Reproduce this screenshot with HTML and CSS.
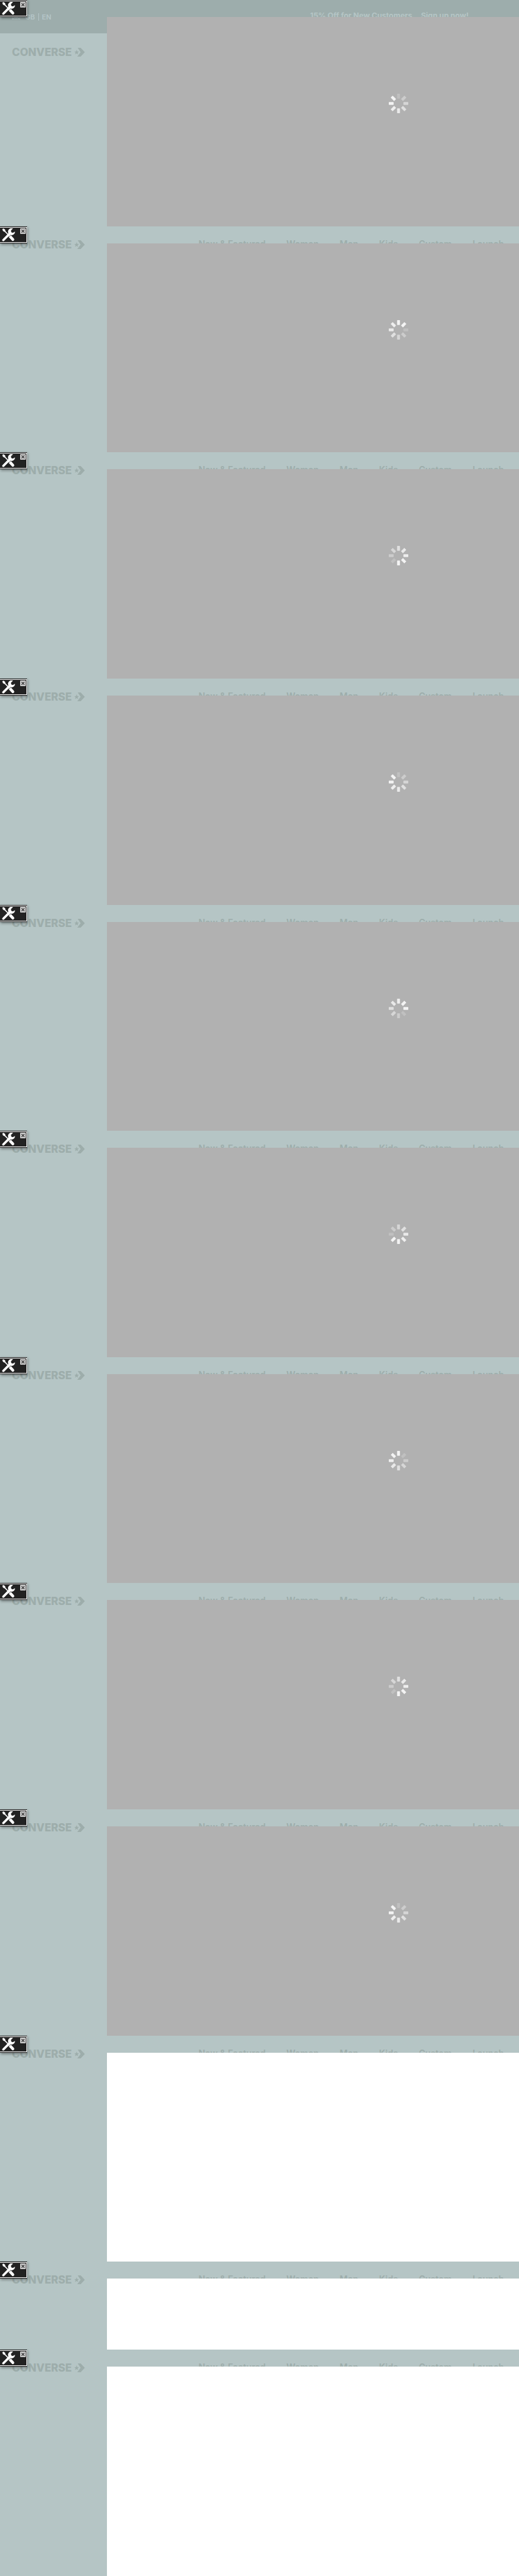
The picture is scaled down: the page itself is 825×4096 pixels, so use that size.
FILE: index.html
```html
<!DOCTYPE html>
<html lang="en">
<head>
<meta charset="utf-8">
<meta name="viewport" content="width=device-width, initial-scale=1">
<title>Converse</title>
<link rel="stylesheet" href="styles.css">
</head>
<body>
<svg class="defs" aria-hidden="true">
  <symbol id="spinner" viewBox="0 0 48 48">
    <g fill="#fff">
      <rect x="20.5" width="7" height="12" rx="1" opacity=".2"/>
      <rect x="20.5" width="7" height="12" rx="1" opacity=".35" transform="rotate(45 24 24)"/>
      <rect x="20.5" width="7" height="12" rx="1" opacity=".48" transform="rotate(90 24 24)"/>
      <rect x="20.5" width="7" height="12" rx="1" opacity=".6" transform="rotate(135 24 24)"/>
      <rect x="20.5" width="7" height="12" rx="1" opacity=".72" transform="rotate(180 24 24)"/>
      <rect x="20.5" width="7" height="12" rx="1" opacity=".78" transform="rotate(225 24 24)"/>
      <rect x="20.5" width="7" height="12" rx="1" opacity=".84" transform="rotate(270 24 24)"/>
      <rect x="20.5" width="7" height="12" rx="1" opacity=".86" transform="rotate(315 24 24)"/>
    </g>
  </symbol>
  <symbol id="tools" viewBox="0 0 32 32">
    <path d="M4 4 L19 19" stroke="#fff" stroke-width="2.4"/>
    <path d="M1 2 L4 .5 L8 3.5 L8.5 7 L6 8.5 L2.5 6.5 Z" fill="#fff"/>
    <path d="M20.5 20.5 L26.5 27" stroke="#fff" stroke-width="7" stroke-linecap="round"/>
    <path d="M17 22 L22 17" stroke="#fff" stroke-width="2"/>
    <path d="M3.5 28.5 L20 12" stroke="#fff" stroke-width="5.5" stroke-linecap="round"/>
    <path d="M27 .5 A8.5 8.5 0 1 0 31.8 8 L26.5 11 L22.5 9.5 L22 5.5 Z" fill="#fff"/>
    <path d="M16 22.5 L22.5 16" stroke="#222" stroke-width="1"/>
  </symbol>
  <symbol id="close" viewBox="0 0 14 14">
    <rect width="14" height="14" rx="1.5" fill="#ccc"/>
    <path d="M3.5 3.5 L10.5 10.5 M10.5 3.5 L3.5 10.5" stroke="#444" stroke-width="2.4"/>
  </symbol>
  <symbol id="chevron" viewBox="0 0 25 21">
    <path d="M8 0 H15 L25 10.5 L15 21 H7 L15 10.5 Z"/>
    <path d="M5.5 4.5 L6.9 8.6 L11 8.9 L7.9 11.5 L9 15.8 L5.5 13.4 L1.7 15.8 L2.9 11.5 L0 8.9 L4.1 8.6 Z"/>
  </symbol>
</svg>

<main>
  <section class="frame frame-first">
    <div class="tools"><button aria-label="Tools"><svg><use href="#tools"/></svg></button><button class="close" aria-label="Close"><svg><use href="#close"/></svg></button></div>
    <div class="side">
      <div class="locale"><svg class="flag" viewBox="0 0 20 14" aria-hidden="true"><path d="M0 0H20V14H0Z M0 0L20 14M20 0L0 14M10 0V14M0 7H20"/></svg><a href="#">GB</a><span class="rule"></span><a href="#">EN</a></div>
      <a class="logo" href="#">CONVERSE<svg aria-hidden="true"><use href="#chevron"/></svg></a>
    </div>
    <div class="strip promo"><span>15% Off for New Customers</span><a href="#">Sign up now!</a></div>
    <div class="panel"><svg class="spinner"><use href="#spinner"/></svg></div>
  </section>

  <section class="frame">
    <div class="tools"><button aria-label="Tools"><svg><use href="#tools"/></svg></button><button class="close" aria-label="Close"><svg><use href="#close"/></svg></button></div>
    <div class="side"><a class="logo" href="#">CONVERSE<svg aria-hidden="true"><use href="#chevron"/></svg></a></div>
    <nav class="strip"><a href="#">New &amp; Featured</a><a href="#">Women</a><a href="#">Men</a><a href="#">Kids</a><a href="#">Custom</a><a href="#">Launch</a></nav>
    <div class="panel"><svg class="spinner turn-2"><use href="#spinner"/></svg></div>
  </section>

  <section class="frame">
    <div class="tools"><button aria-label="Tools"><svg><use href="#tools"/></svg></button><button class="close" aria-label="Close"><svg><use href="#close"/></svg></button></div>
    <div class="side"><a class="logo" href="#">CONVERSE<svg aria-hidden="true"><use href="#chevron"/></svg></a></div>
    <nav class="strip"><a href="#">New &amp; Featured</a><a href="#">Women</a><a href="#">Men</a><a href="#">Kids</a><a href="#">Custom</a><a href="#">Launch</a></nav>
    <div class="panel"><svg class="spinner turn-5"><use href="#spinner"/></svg></div>
  </section>

  <section class="frame">
    <div class="tools"><button aria-label="Tools"><svg><use href="#tools"/></svg></button><button class="close" aria-label="Close"><svg><use href="#close"/></svg></button></div>
    <div class="side"><a class="logo" href="#">CONVERSE<svg aria-hidden="true"><use href="#chevron"/></svg></a></div>
    <nav class="strip"><a href="#">New &amp; Featured</a><a href="#">Women</a><a href="#">Men</a><a href="#">Kids</a><a href="#">Custom</a><a href="#">Launch</a></nav>
    <div class="panel"><svg class="spinner"><use href="#spinner"/></svg></div>
  </section>

  <section class="frame">
    <div class="tools"><button aria-label="Tools"><svg><use href="#tools"/></svg></button><button class="close" aria-label="Close"><svg><use href="#close"/></svg></button></div>
    <div class="side"><a class="logo" href="#">CONVERSE<svg aria-hidden="true"><use href="#chevron"/></svg></a></div>
    <nav class="strip"><a href="#">New &amp; Featured</a><a href="#">Women</a><a href="#">Men</a><a href="#">Kids</a><a href="#">Custom</a><a href="#">Launch</a></nav>
    <div class="panel"><svg class="spinner turn-3"><use href="#spinner"/></svg></div>
  </section>

  <section class="frame">
    <div class="tools"><button aria-label="Tools"><svg><use href="#tools"/></svg></button><button class="close" aria-label="Close"><svg><use href="#close"/></svg></button></div>
    <div class="side"><a class="logo" href="#">CONVERSE<svg aria-hidden="true"><use href="#chevron"/></svg></a></div>
    <nav class="strip"><a href="#">New &amp; Featured</a><a href="#">Women</a><a href="#">Men</a><a href="#">Kids</a><a href="#">Custom</a><a href="#">Launch</a></nav>
    <div class="panel"><svg class="spinner turn-6"><use href="#spinner"/></svg></div>
  </section>

  <section class="frame">
    <div class="tools"><button aria-label="Tools"><svg><use href="#tools"/></svg></button><button class="close" aria-label="Close"><svg><use href="#close"/></svg></button></div>
    <div class="side"><a class="logo" href="#">CONVERSE<svg aria-hidden="true"><use href="#chevron"/></svg></a></div>
    <nav class="strip"><a href="#">New &amp; Featured</a><a href="#">Women</a><a href="#">Men</a><a href="#">Kids</a><a href="#">Custom</a><a href="#">Launch</a></nav>
    <div class="panel"><svg class="spinner turn-1"><use href="#spinner"/></svg></div>
  </section>

  <section class="frame">
    <div class="tools"><button aria-label="Tools"><svg><use href="#tools"/></svg></button><button class="close" aria-label="Close"><svg><use href="#close"/></svg></button></div>
    <div class="side"><a class="logo" href="#">CONVERSE<svg aria-hidden="true"><use href="#chevron"/></svg></a></div>
    <nav class="strip"><a href="#">New &amp; Featured</a><a href="#">Women</a><a href="#">Men</a><a href="#">Kids</a><a href="#">Custom</a><a href="#">Launch</a></nav>
    <div class="panel"><svg class="spinner turn-5"><use href="#spinner"/></svg></div>
  </section>

  <section class="frame">
    <div class="tools"><button aria-label="Tools"><svg><use href="#tools"/></svg></button><button class="close" aria-label="Close"><svg><use href="#close"/></svg></button></div>
    <div class="side"><a class="logo" href="#">CONVERSE<svg aria-hidden="true"><use href="#chevron"/></svg></a></div>
    <nav class="strip"><a href="#">New &amp; Featured</a><a href="#">Women</a><a href="#">Men</a><a href="#">Kids</a><a href="#">Custom</a><a href="#">Launch</a></nav>
    <div class="panel"><svg class="spinner"><use href="#spinner"/></svg></div>
  </section>

  <section class="frame">
    <div class="tools"><button aria-label="Tools"><svg><use href="#tools"/></svg></button><button class="close" aria-label="Close"><svg><use href="#close"/></svg></button></div>
    <div class="side"><a class="logo" href="#">CONVERSE<svg aria-hidden="true"><use href="#chevron"/></svg></a></div>
    <nav class="strip"><a href="#">New &amp; Featured</a><a href="#">Women</a><a href="#">Men</a><a href="#">Kids</a><a href="#">Custom</a><a href="#">Launch</a></nav>
    <div class="panel blank"></div>
  </section>

  <section class="frame frame-short">
    <div class="tools"><button aria-label="Tools"><svg><use href="#tools"/></svg></button><button class="close" aria-label="Close"><svg><use href="#close"/></svg></button></div>
    <div class="side"><a class="logo" href="#">CONVERSE<svg aria-hidden="true"><use href="#chevron"/></svg></a></div>
    <nav class="strip"><a href="#">New &amp; Featured</a><a href="#">Women</a><a href="#">Men</a><a href="#">Kids</a><a href="#">Custom</a><a href="#">Launch</a></nav>
    <div class="panel blank"></div>
  </section>

  <section class="frame frame-last">
    <div class="tools"><button aria-label="Tools"><svg><use href="#tools"/></svg></button><button class="close" aria-label="Close"><svg><use href="#close"/></svg></button></div>
    <div class="side"><a class="logo" href="#">CONVERSE<svg aria-hidden="true"><use href="#chevron"/></svg></a></div>
    <nav class="strip"><a href="#">New &amp; Featured</a><a href="#">Women</a><a href="#">Men</a><a href="#">Kids</a><a href="#">Custom</a><a href="#">Launch</a></nav>
    <div class="panel blank"></div>
  </section>
</main>
</body>
</html>
```
FILE: styles.css
```css
* { box-sizing: border-box; }

body {
  margin: 0;
  background: #b5c5c5;
  color: #9dadab;
  font-family: Inter, "Liberation Sans", sans-serif;
}

a { color: inherit; text-decoration: none; }

.defs { display: none; }

.frame {
  position: relative;
  display: grid;
  grid-template-columns: 170px 1fr;
  grid-template-rows: 27px 1fr;
  aspect-ratio: 1280 / 558;
}
.frame-short { aspect-ratio: 1280 / 216; }
.frame-last { aspect-ratio: 1280 / 559; }

.side {
  grid-row: 1 / 3;
  padding-top: 19px;
}
.frame-first .side { padding-top: 0; }

.logo {
  display: flex;
  align-items: center;
  gap: 4px;
  padding-left: 19px;
  font-size: 17px;
  line-height: 20px;
  font-weight: 800;
}
.logo svg { width: 17px; height: 14px; fill: currentColor; }
.frame-first .logo { margin-top: 20px; }

.locale {
  display: flex;
  align-items: center;
  gap: 5px;
  height: 53px;
  padding-left: 19px;
  background: #9dadac;
  color: #b5c5c8;
  font-size: 11px;
  font-weight: 600;
}
.flag { width: 13px; height: 9px; margin-right: 3px; fill: none; stroke: #b5c5c8; stroke-width: 2; }
.rule { width: 1px; height: 12px; background: #b5c5c8; }

.strip {
  display: flex;
  justify-content: flex-end;
  gap: 33px;
  overflow: hidden;
  padding: 20px 24px 0 0;
  font-size: 14px;
  line-height: 16px;
  font-weight: 600;
  white-space: nowrap;
}
.promo {
  gap: 14px;
  padding: 17px 80px 0 0;
  background: #9dadac;
  color: #b5c5c5;
  font-size: 12px;
  font-weight: 700;
}

.panel {
  padding: 122px 0 0 448px;
  background: #b1b1b1;
}
.blank { padding: 0; background: #fff; }

.spinner { display: block; width: 31px; height: 31px; }
.turn-1 { rotate: 45deg; }
.turn-2 { rotate: 90deg; }
.turn-3 { rotate: 135deg; }
.turn-5 { rotate: 225deg; }
.turn-6 { rotate: 270deg; }

/* Floating toolbar in the corner of each frame */
.tools {
  position: absolute;
  top: 0;
  left: 0;
  display: flex;
  align-items: flex-start;
  gap: 8px;
  width: 43px;
  height: 27px;
  padding: 3px 0 0 3px;
  background: #222;
  box-shadow: inset 0 1px #111, 1px 2px 4px rgba(0, 0, 0, .4);
}
.tools::after {
  content: "";
  position: absolute;
  inset: 1px 0 1px 0;
  border: 1px solid #fff;
  border-left: 0;
  pointer-events: none;
}
.tools button { padding: 0; border: 0; background: none; }
.tools svg { display: block; width: 21px; height: 21px; }
.tools .close svg { width: 9px; height: 9px; }
```
